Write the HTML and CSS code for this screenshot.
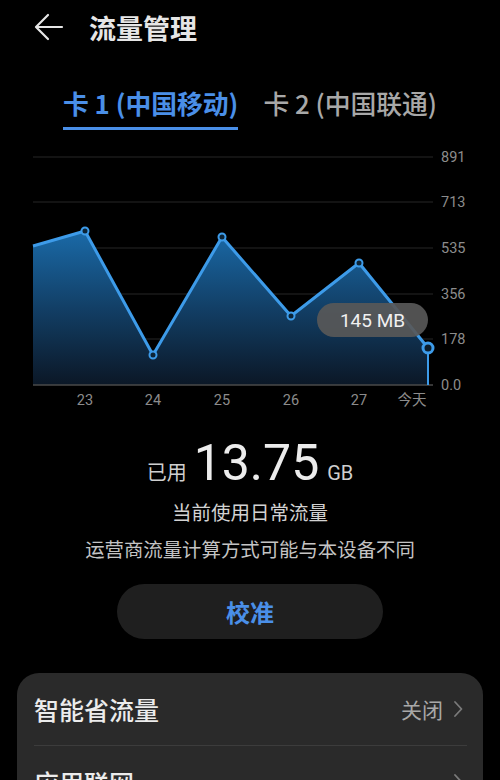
FILE: index.html
```html
<!DOCTYPE html>
<html lang="zh-CN">
<head>
<meta charset="utf-8">
<link rel="stylesheet" href="styles.css">
</head>
<body>
<div class="page">
  <header class="header">
    <svg class="back" width="30" height="28" viewBox="0 0 30 28">
      <path d="M28 14H3M14 2L2 14l12 12" fill="none" stroke="#e6e6e6" stroke-width="2.2" stroke-linecap="round" stroke-linejoin="round"/>
    </svg>
    <h1 class="title">流量管理</h1>
  </header>

  <nav class="tabs">
    <div class="tab active">卡 1 (中国移动)</div>
    <div class="tab">卡 2 (中国联通)</div>
  </nav>

  <div class="chart">
    <svg class="chart-svg" width="500" height="266" viewBox="0 0 500 266">
      <defs>
        <linearGradient id="fillg" x1="0" y1="0" x2="0" y2="1">
          <stop offset="0" stop-color="#1a6aa8"/>
          <stop offset="0.5" stop-color="#123f66"/>
          <stop offset="1" stop-color="#0b1726"/>
        </linearGradient>
      </defs>
      <g stroke="#262626" stroke-width="1">
        <line x1="33" y1="9" x2="433" y2="9"/>
        <line x1="33" y1="54" x2="433" y2="54"/>
        <line x1="33" y1="100" x2="433" y2="100"/>
        <line x1="33" y1="146" x2="433" y2="146"/>
        <line x1="33" y1="191" x2="433" y2="191"/>
      </g>
      <polygon points="33,98 85,83 153,207 222,89 291,168 359,115 428,200 428,237 33,237" fill="url(#fillg)"/>
      <line x1="33" y1="237" x2="433" y2="237" stroke="#4a4a4a" stroke-width="1.5"/>
      <polyline points="33,98 85,83 153,207 222,89 291,168 359,115 428,200" fill="none" stroke="#3d9be9" stroke-width="3" stroke-linejoin="round"/>
      <line x1="428" y1="200" x2="428" y2="237" stroke="#3d9be9" stroke-width="2"/>
      <g fill="#0d2436" stroke="#3d9be9" stroke-width="2">
        <circle cx="85" cy="83" r="3.5"/>
        <circle cx="153" cy="207" r="3.5"/>
        <circle cx="222" cy="89" r="3.5"/>
        <circle cx="291" cy="168" r="3.5"/>
        <circle cx="359" cy="115" r="3.5"/>
      </g>
      <circle cx="428" cy="200" r="5" fill="#0d1e2c" stroke="#3d9be9" stroke-width="3"/>
      <g class="ylab" font-size="14.5" fill="#8c8c8c">
        <text x="441" y="14">891</text>
        <text x="441" y="59">713</text>
        <text x="441" y="105">535</text>
        <text x="441" y="151">356</text>
        <text x="441" y="196">178</text>
        <text x="441" y="242">0.0</text>
      </g>
      <g class="xlab" font-size="14.5" fill="#8c8c8c" text-anchor="middle">
        <text x="85" y="257">23</text>
        <text x="153" y="257">24</text>
        <text x="222" y="257">25</text>
        <text x="291" y="257">26</text>
        <text x="359" y="257">27</text>
        <text x="412" y="257">今天</text>
      </g>
    </svg>
    <div class="tooltip">145 MB</div>
  </div>

  <section class="summary">
    <div class="used">
      <span class="used-label">已用</span>
      <span class="used-num">13.75</span>
      <span class="used-unit">GB</span>
    </div>
    <p class="desc1">当前使用日常流量</p>
    <p class="desc2">运营商流量计算方式可能与本设备不同</p>
    <div class="btn-wrap"><button class="btn">校准</button></div>
  </section>

  <section class="card">
    <div class="row">
      <span class="row-title">智能省流量</span>
      <span class="row-right">
        <span class="row-value">关闭</span>
        <svg class="chev" width="10" height="18" viewBox="0 0 10 18"><path d="M2 2l6.5 7L2 16" fill="none" stroke="#7a7a7a" stroke-width="1.8" stroke-linecap="round" stroke-linejoin="round"/></svg>
      </span>
    </div>
    <div class="divider"></div>
    <div class="row">
      <span class="row-title">应用联网</span>
      <span class="row-right">
        <svg class="chev" width="10" height="18" viewBox="0 0 10 18"><path d="M2 2l6.5 7L2 16" fill="none" stroke="#7a7a7a" stroke-width="1.8" stroke-linecap="round" stroke-linejoin="round"/></svg>
      </span>
    </div>
  </section>
</div>
</body>
</html>
```

FILE: styles.css
```css
* { box-sizing: border-box; }
html, body {
  margin: 0;
  padding: 0;
  background: #000;
}
body {
  font-family: "Noto Sans CJK SC", "Noto Sans", Roboto, sans-serif;
  color: #e6e6e6;
  width: 500px;
  height: 780px;
  overflow: hidden;
}
.page {
  width: 500px;
}
.header {
  height: 54px;
  display: flex;
  align-items: center;
  padding-left: 34px;
}
.back {
  display: block;
  margin-right: 25px;
}
.title {
  margin: 0;
  font-size: 27px;
  font-weight: 700;
  color: #e6e6e6;
  line-height: 1;
}
.tabs {
  display: flex;
  justify-content: center;
  gap: 25px;
  padding-top: 33px;
}
.tab {
  font-size: 25.8px;
  line-height: 32px;
  font-weight: 500;
  color: #a8a8a8;
  padding-bottom: 8px;
  border-bottom: 3px solid transparent;
}
.tab.active {
  color: #4a8fe8;
  font-weight: 700;
  border-bottom-color: #4a8fe8;
}
.chart {
  position: relative;
  margin-top: 18px;
  height: 266px;
}
.chart-svg {
  display: block;
}
.chart-svg text {
  font-family: Roboto, "Noto Sans CJK SC", sans-serif;
}
.tooltip {
  position: absolute;
  left: 317px;
  top: 155px;
  width: 111px;
  height: 34px;
  border-radius: 17px;
  background: rgba(88, 88, 88, 0.92);
  color: #f0f0f0;
  font-family: Roboto, sans-serif;
  font-size: 19px;
  display: flex;
  align-items: center;
  justify-content: center;
}
.summary {
  display: flex;
  flex-direction: column;
  align-items: center;
}
.used {
  display: flex;
  align-items: baseline;
  gap: 7px;
  margin-top: 21px;
  height: 56px;
}
.used-label {
  font-size: 20px;
  color: #cfcfcf;
}
.used-num {
  font-family: Roboto, sans-serif;
  font-size: 50px;
  line-height: 56px;
  color: #ececec;
}
.used-unit {
  font-family: Roboto, sans-serif;
  font-size: 20px;
  color: #cfcfcf;
  margin-left: 1px;
}
.desc1 {
  margin: 7px 0 0;
  font-size: 19.5px;
  line-height: 28px;
  color: #d2d2d2;
}
.desc2 {
  margin: 9px 0 0;
  font-size: 19.4px;
  line-height: 28px;
  color: #c4c4c4;
}
.btn-wrap {
  margin-top: 21px;
}
.btn {
  width: 266px;
  height: 55px;
  border: none;
  border-radius: 28px;
  background: #1f1f1f;
  color: #4a8fe8;
  font-family: "Noto Sans CJK SC", sans-serif;
  font-size: 24px;
  font-weight: 700;
  padding: 0;
}
.card {
  margin: 34px 17px 0;
  background: #2a2a2a;
  border-radius: 22px;
  padding: 0 20px 0 17px;
  height: 200px;
}
.row {
  height: 72px;
  display: flex;
  align-items: center;
  justify-content: space-between;
}
.row-title {
  font-size: 25px;
  font-weight: 500;
  color: #ececec;
}
.row-right {
  display: flex;
  align-items: center;
  gap: 10px;
}
.row-value {
  font-size: 21px;
  color: #a8a8a8;
}
.chev {
  display: block;
}
.divider {
  height: 1px;
  background: #3c3c3c;
  margin-right: -4px;
}
```
